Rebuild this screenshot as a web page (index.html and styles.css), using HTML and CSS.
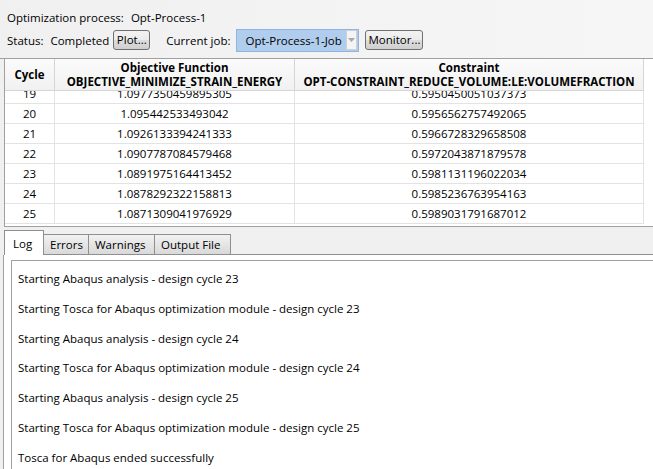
FILE: index.html
```html
<!DOCTYPE html>
<html>
<head>
<meta charset="utf-8">
<link rel="stylesheet" href="styles.css">
</head>
<body>
<div class="top">
  <div class="row1"><span class="lbl">Optimization process:</span><span>Opt-Process-1</span></div>
  <div class="row2">
    <span class="lbl">Status:</span><span class="status">Completed</span>
    <button class="btn plot">Plot...</button>
    <span class="lbl job">Current job:</span>
    <div class="combo"><span class="combo-text">Opt-Process-1-Job</span><span class="arrow"><svg width="7" height="4" viewBox="0 0 7 4"><path d="M0 0H7L3.5 4Z" fill="#a8a8a8"/></svg></span></div>
    <button class="btn monitor">Monitor...</button>
  </div>
</div>
<div class="sep"></div>
<div class="table">
  <div class="thead">
    <div class="th">Cycle</div>
    <div class="th">Objective Function<br>OBJECTIVE_MINIMIZE_STRAIN_ENERGY</div>
    <div class="th">Constraint<br>OPT-CONSTRAINT_REDUCE_VOLUME:LE:VOLUMEFRACTION</div>
    <div class="th blank"></div>
  </div>
  <div class="tbody">
    <div class="rows">
      <div class="tr"><div class="td">19</div><div class="td">1.0977350459895305</div><div class="td">0.5950450051037373</div><div class="td blank"></div></div>
      <div class="tr"><div class="td">20</div><div class="td">1.095442533493042</div><div class="td">0.5956562757492065</div><div class="td blank"></div></div>
      <div class="tr"><div class="td">21</div><div class="td">1.0926133394241333</div><div class="td">0.5966728329658508</div><div class="td blank"></div></div>
      <div class="tr"><div class="td">22</div><div class="td">1.0907787084579468</div><div class="td">0.5972043871879578</div><div class="td blank"></div></div>
      <div class="tr"><div class="td">23</div><div class="td">1.0891975164413452</div><div class="td">0.5981131196022034</div><div class="td blank"></div></div>
      <div class="tr"><div class="td">24</div><div class="td">1.0878292322158813</div><div class="td">0.5985236763954163</div><div class="td blank"></div></div>
      <div class="tr"><div class="td">25</div><div class="td">1.0871309041976929</div><div class="td">0.5989031791687012</div><div class="td blank"></div></div>
    </div>
  </div>
</div>
<div class="tabs">
  <div class="tab active">Log</div>
  <div class="tab">Errors</div>
  <div class="tab">Warnings</div>
  <div class="tab">Output File</div>
  <div class="tab-fill"></div>
</div>
<div class="panel">
  <div class="log">
    <div class="line">Starting Abaqus analysis - design cycle 23</div>
    <div class="line">Starting Tosca for Abaqus optimization module - design cycle 23</div>
    <div class="line">Starting Abaqus analysis - design cycle 24</div>
    <div class="line">Starting Tosca for Abaqus optimization module - design cycle 24</div>
    <div class="line">Starting Abaqus analysis - design cycle 25</div>
    <div class="line">Starting Tosca for Abaqus optimization module - design cycle 25</div>
    <div class="line">Tosca for Abaqus ended successfully</div>
  </div>
</div>
</body>
</html>
```
FILE: styles.css
```css
* { box-sizing: border-box; }
html, body { margin: 0; padding: 0; }
body {
  width: 653px;
  height: 469px;
  overflow: hidden;
  background: #f0f0f0;
  font-family: "Open Sans", "Segoe UI", sans-serif;
  font-size: 11.5px;
  color: #000;
}
.top { padding: 0 0 0 7px; height: 58px; background: linear-gradient(90deg, #f0f0f0, #f6f6f6); }
.row1 { height: 28px; padding-top: 6px; display: flex; align-items: center; }
.row1 .lbl { margin-right: 7px; }
.row2 { display: flex; align-items: center; height: 24px; }
.row2 .lbl { margin-right: 7px; }
.status { margin-right: 4px; }
.btn {
  font: inherit;
  color: #000;
  height: 20px;
  padding: 0 2px;
  border: 1px solid #707070;
  border-radius: 3px;
  background: linear-gradient(#f2f2f2, #ebebeb 50%, #dddddd 51%, #cfcfcf);
  line-height: 18px;
  white-space: nowrap;
}
.plot { width: 37px; margin-right: 16px; }
.job { margin-right: 6px !important; }
.combo {
  width: 123px;
  height: 23px;
  background: #b1cdee;
  border: 1px solid #8fb4e0;
  display: flex;
  align-items: center;
  padding-left: 8px;
  margin-right: 6px;
}
.combo-text { flex: 1; white-space: nowrap; }
.arrow {
  width: 11px;
  height: 20px;
  margin-right: 1px;
  background: #f4f4f4;
  border: 1px solid #d0d0d0;
  display: flex;
  align-items: center;
  justify-content: center;
}
.monitor { width: 58px; }
.sep { height: 1px; background: #a0a0a0; }
.table {
  margin-left: 4px;
  border-left: 1px solid #a0a0a0;
  border-bottom: 1px solid #a0a0a0;
  background: #fff;
}
.thead, .tr {
  display: grid;
  grid-template-columns: 50px 240px 349px 1fr;
}
.th {
  height: 32px;
  background: linear-gradient(#fbfbfb, #f1f1f1);
  border-right: 1px solid #d5d5d5;
  border-bottom: 1px solid #d5d5d5;
  font-weight: bold;
  text-align: center;
  line-height: 14px;
  display: flex;
  align-items: center;
  justify-content: center;
  white-space: nowrap;
}
.th.blank { background: #fff; border: none; }
.tbody { height: 135px; overflow: hidden; }
.rows { margin-top: -7px; }
.td {
  height: 20px;
  border-right: 1px solid #e3e3e3;
  border-bottom: 1px solid #e3e3e3;
  text-align: center;
  line-height: 20px;
}
.td.blank { border: none; }
.tabs {
  display: flex;
  align-items: flex-end;
  height: 28px;
  padding-left: 4px;
}
.tab {
  height: 21px;
  border: 1px solid #8e8f8f;
  border-left: none;
  background: linear-gradient(#f2f2f2, #e5e5e5 50%, #d9d9d9);
  padding: 0 6px;
  line-height: 19px;
  white-space: nowrap;
}
.tab.active {
  height: 25px;
  background: #fff;
  border-left: 1px solid #8e8f8f;
  border-bottom: none;
  padding: 0 8px;
  line-height: 25px;
  width: 40px;
}
.tab:nth-child(2) { width: 45px; }
.tab:nth-child(3) { width: 66px; }
.tab:nth-child(4) { width: 76px; }
.tab-fill { flex: 1; border-bottom: 1px solid #8e8f8f; }
.panel {
  margin-left: 3px;
  border-left: 1px solid #a0a0a0;
  background: #fff;
  padding: 5px 0 0 7px;
  height: 214px;
}
.log {
  border-top: 1px solid #a0a0a0;
  border-left: 1px solid #a0a0a0;
  padding: 3px 0 0 6px;
  height: 209px;
  overflow: hidden;
}
.line { line-height: 29.83px; white-space: nowrap; }
```
